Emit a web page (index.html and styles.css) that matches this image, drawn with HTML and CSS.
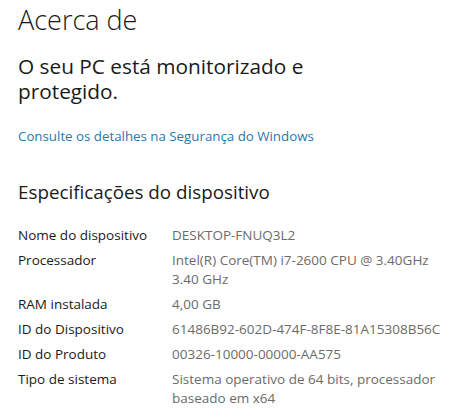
FILE: index.html
```html
<!DOCTYPE html>
<html lang="pt">
<head>
<meta charset="utf-8">
<title>Acerca de</title>
<link rel="stylesheet" href="styles.css">
</head>
<body>
<main class="page">
  <h1 class="title">Acerca de</h1>
  <p class="status">O seu PC está monitorizado e<br>protegido.</p>
  <a class="link" href="#">Consulte os detalhes na Segurança do Windows</a>
  <h2 class="section">Especificações do dispositivo</h2>
  <dl class="specs">
    <div class="row"><dt>Nome do dispositivo</dt><dd>DESKTOP-FNUQ3L2</dd></div>
    <div class="row"><dt>Processador</dt><dd>Intel(R) Core(TM) i7-2600 CPU @ 3.40GHz<br>3.40 GHz</dd></div>
    <div class="row"><dt>RAM instalada</dt><dd>4,00 GB</dd></div>
    <div class="row"><dt>ID do Dispositivo</dt><dd>61486B92-602D-474F-8F8E-81A15308B56C</dd></div>
    <div class="row"><dt>ID do Produto</dt><dd>00326-10000-00000-AA575</dd></div>
    <div class="row"><dt>Tipo de sistema</dt><dd>Sistema operativo de 64 bits, processador<br>baseado em x64</dd></div>
  </dl>
</main>
</body>
</html>
```
FILE: styles.css
```css
html, body {
  margin: 0;
  background: #ffffff;
}
body {
  font-family: "Open Sans", "Noto Sans", sans-serif;
  color: #1a1a1a;
}
.page {
  padding: 0 0 0 18px;
}
.title {
  margin: 0;
  font-size: 27px;
  font-weight: 300;
  line-height: 40px;
  height: 40px;
}
.status {
  margin: 14px 0 0;
  font-size: 20.8px;
  font-weight: 400;
  line-height: 25px;
}
.link {
  display: block;
  margin-top: 22px;
  font-size: 13.3px;
  line-height: 20px;
  color: #1f7ab0;
  text-decoration: none;
}
.section {
  margin: 32px 0 0;
  font-size: 18.8px;
  font-weight: 400;
  line-height: 28px;
}
.specs {
  margin: 20px 0 0;
  font-size: 13.5px;
  line-height: 19px;
}
.row {
  display: flex;
  margin-bottom: 6px;
}
.row dt {
  width: 154px;
  flex: none;
  color: #1a1a1a;
}
.row dd {
  margin: 0;
  color: #6b6b6b;
}
```
